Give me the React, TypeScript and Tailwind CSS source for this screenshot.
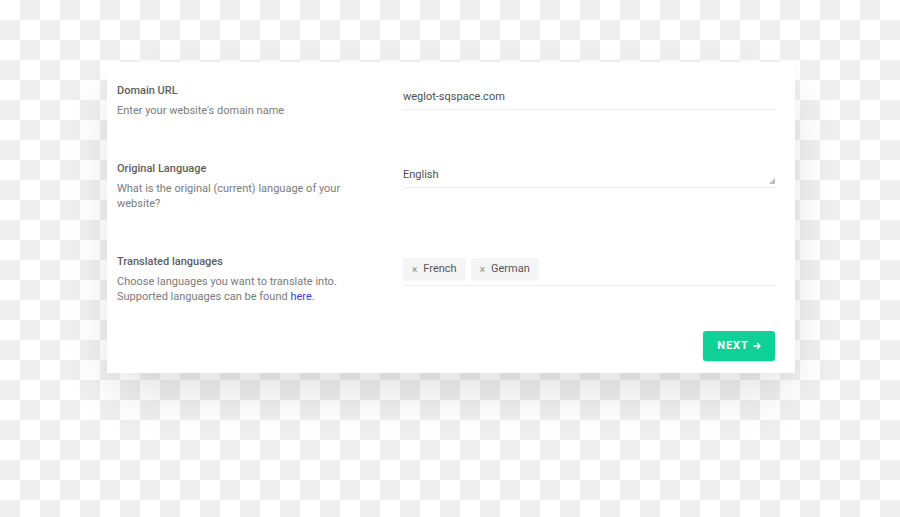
export default function App() {
  return (
    <div className="min-h-[517px] w-full overflow-hidden bg-[image:conic-gradient(#efefef_90deg,#ffffff_90deg_180deg,#efefef_180deg_270deg,#ffffff_270deg)] bg-size-[40px_40px] pt-[62px] font-['Roboto',sans-serif]">
      <div className="ml-[107px] w-[688px] h-[311px] bg-white shadow-[0_24px_50px_-8px_rgba(0,0,0,0.13)] pt-[21px] pb-[12px] pl-[10px] pr-[20px] flex flex-col">
        {/* Domain */}
        <div className="flex">
          <div className="w-[286px] shrink-0">
            <div className="text-[11px] leading-4 font-medium text-[#5e5e5e]">Domain URL</div>
            <div className="mt-1 text-[11px] leading-[15px] text-[#7b7b7b]">Enter your website's domain name</div>
          </div>
          <div className="flex-1 mt-[6px]">
            <div className="pb-[4px] border-b border-[#eeeeee] text-[11px] leading-4 text-[#4f4f4f]">weglot-sqspace.com</div>
          </div>
        </div>

        {/* Original language */}
        <div className="flex mt-[43px]">
          <div className="w-[286px] shrink-0">
            <div className="text-[11px] leading-4 font-medium text-[#5e5e5e]">Original Language</div>
            <div className="mt-1 w-[240px] text-[11px] leading-[15px] text-[#7b7b7b]">What is the original (current) language of your website?</div>
          </div>
          <div className="flex-1 mt-[6px]">
            <div className="relative pb-[4px] border-b border-[#eeeeee] text-[11px] leading-4 text-[#4f4f4f]">
              English
              <svg className="absolute right-0 bottom-[3px]" width="6" height="6" viewBox="0 0 6 6">
                <path d="M6 0 L6 6 L0 6 Z" fill="#bdbdbd" />
              </svg>
            </div>
          </div>
        </div>

        {/* Translated languages */}
        <div className="flex mt-[43px]">
          <div className="w-[286px] shrink-0">
            <div className="text-[11px] leading-4 font-medium text-[#5e5e5e]">Translated languages</div>
            <div className="mt-[4px] text-[11px] leading-[15px] text-[#7b7b7b]">
              Choose languages you want to translate into.
              <br />
              Supported languages can be found <span className="text-[#3d3ddb]">here</span>.
            </div>
          </div>
          <div className="flex-1 mt-[4px]">
            <div className="flex gap-[5px] pb-[4px] border-b border-[#eeeeee]">
              {['French', 'German'].map(lang => (
                <div key={lang} className="h-[23px] flex items-center gap-[6px] pl-[9px] pr-[9px] bg-[#f5f5f5] rounded-[2px] text-[11px] text-[#555]">
                  <span className="text-[10px] text-[#888]">×</span>
                  {lang}
                </div>
              ))}
            </div>
          </div>
        </div>

        <div className="flex justify-end mt-auto">
          <button className="w-[72px] h-[30px] rounded-[3px] bg-[#0fd197] shadow-[0_1px_2px_rgba(0,0,0,0.15)] text-white text-[11px] font-bold tracking-[0.08em] flex items-center justify-center gap-[4px]">
            NEXT
            <svg width="8" height="8" viewBox="0 0 8 8" fill="none" stroke="white" strokeWidth="1.4" strokeLinecap="round" strokeLinejoin="round">
              <path d="M1 4 H7 M4.5 1.5 L7 4 L4.5 6.5" />
            </svg>
          </button>
        </div>
      </div>
    </div>
  );
}
